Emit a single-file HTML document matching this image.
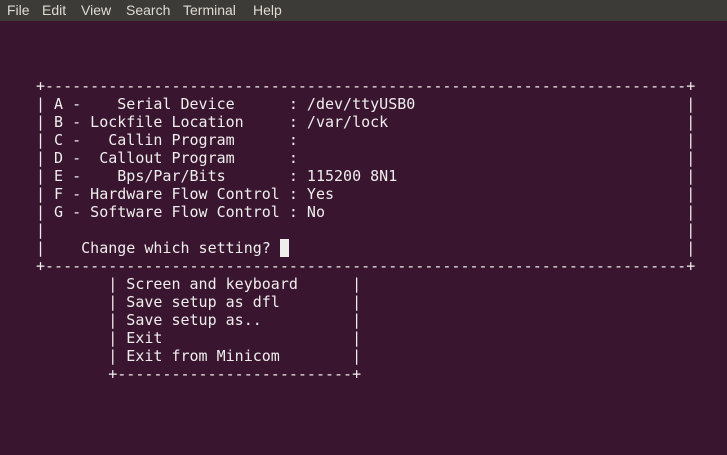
<!DOCTYPE html>
<html><head><meta charset="utf-8"><style>
html,body{margin:0;padding:0;width:727px;height:455px;overflow:hidden;background:#3a1530;}
#menu{position:absolute;left:0;top:0;width:727px;height:21px;background:#3c3b37;color:#dfdbd2;font:14px "Liberation Sans",sans-serif;}
#menu span{position:absolute;top:2px;}
pre{position:absolute;left:36px;top:77px;margin:0;font:15px/18px "DejaVu Sans Mono","Liberation Mono",monospace;color:#eeeeec;}
.cur{background:#eeeeec;}
</style></head><body>
<div id="menu"><span style="left:7px">File</span><span style="left:42px">Edit</span><span style="left:81px">View</span><span style="left:126px">Search</span><span style="left:183px">Terminal</span><span style="left:253px">Help</span></div>
<pre>+-----------------------------------------------------------------------+
| A -    Serial Device      : /dev/ttyUSB0                              |
| B - Lockfile Location     : /var/lock                                 |
| C -   Callin Program      :                                           |
| D -  Callout Program      :                                           |
| E -    Bps/Par/Bits       : 115200 8N1                                |
| F - Hardware Flow Control : Yes                                       |
| G - Software Flow Control : No                                        |
|                                                                       |
|    Change which setting? <span class="cur"> </span>                                            |
+-----------------------------------------------------------------------+
        | Screen and keyboard      |
        | Save setup as dfl        |
        | Save setup as..          |
        | Exit                     |
        | Exit from Minicom        |
        +--------------------------+</pre>
</body></html>
